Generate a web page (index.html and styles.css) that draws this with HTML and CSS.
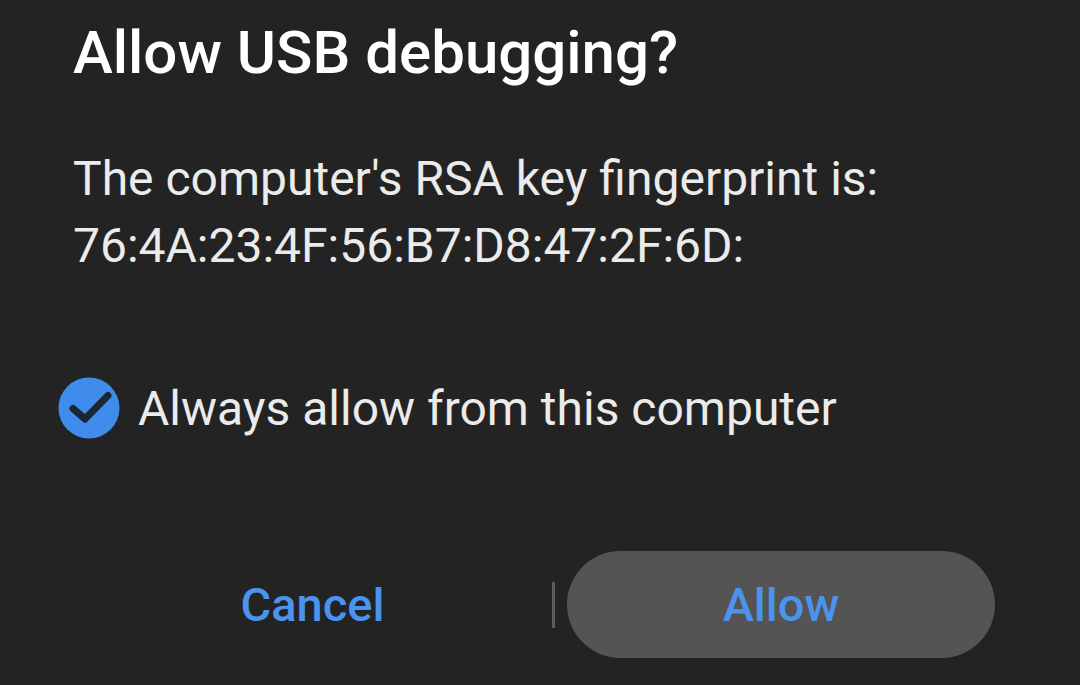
FILE: index.html
```html
<!DOCTYPE html>
<html>
    <head>
        <title>Allow USB debugging?</title>
        <link rel="stylesheet" href="styles.css">
    </head>
    <body>
        <div class="dialog">
            <h1 class="dialog-title">Allow USB debugging?</h1>

            <div class="dialog-message">
                <p>The computer's RSA key fingerprint is:</p>
                <p>76:4A:23:4F:56:B7:D8:47:2F:6D:</p>
            </div>

            <!-- always allow checkbox -->
            <label class="check-row">
                <span class="check-circle">
                    <svg width="62" height="62" viewBox="0 0 62 62">
                        <circle cx="31" cy="31" r="30.5" fill="#3f8cec"/>
                        <path d="M15 31.5 L27 42 L50 18.5" fill="none" stroke="#1c2532" stroke-width="7" stroke-linecap="round" stroke-linejoin="round"/>
                    </svg>
                </span>
                <span class="check-label">Always allow from this computer</span>
            </label>

            <div class="dialog-buttons">
                <button class="btn btn-cancel">Cancel</button>
                <span class="btn-divider"></span>
                <button class="btn btn-allow">Allow</button>
            </div>
        </div>
    </body>
</html>
```

FILE: styles.css
```css
html, body {
    margin: 0;
    padding: 0;
    background-color: #232323;
}

body {
    width: 1080px;
    height: 685px;
    overflow: hidden;
    font-family: Roboto, "Noto Sans", sans-serif;
    color: #ececec;
}

.dialog {
    display: flex;
    flex-direction: column;
    padding: 17px 0 0 73px;
}

.dialog-title {
    margin: 0;
    font-size: 60px;
    font-weight: 500;
    line-height: 72px;
    color: #ffffff;
}

.dialog-message {
    margin-top: 56px;
}
.dialog-message p {
    margin: 0;
    font-size: 48px;
    line-height: 67px;
    color: #ebebeb;
}

.check-row {
    display: flex;
    flex-direction: row;
    align-items: center;
    gap: 18px;
    height: 62px;
    margin-top: 98px;
    margin-left: -15px;
}
.check-circle {
    display: flex;
    width: 62px;
    height: 62px;
}
.check-label {
    font-size: 48px;
    color: #ebebeb;
}

.dialog-buttons {
    display: flex;
    flex-direction: row;
    align-items: center;
    margin-top: 112px;
    margin-left: -73px;
    padding: 0 85px 0 85px;
}

.btn {
    font-family: Roboto, "Noto Sans", sans-serif;
    font-size: 47px;
    font-weight: 500;
    color: #4b93ec;
    background: none;
    border: none;
    height: 107px;
    border-radius: 54px;
}
.btn-cancel {
    flex: 1;
}
.btn-divider {
    width: 3px;
    height: 46px;
    margin: 0 12px;
    background-color: #5c5c5c;
}
.btn-allow {
    width: 428px;
    background-color: #545454;
}
```
